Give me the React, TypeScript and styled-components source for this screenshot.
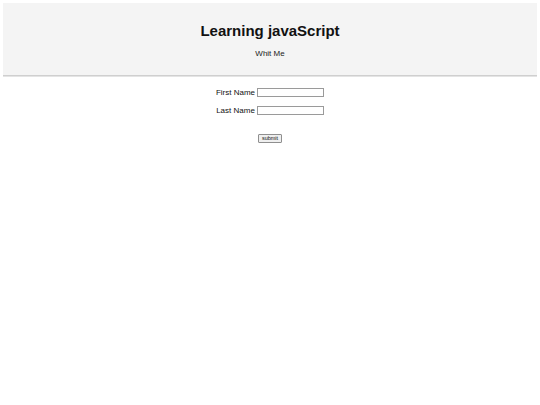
import React from "react";
import styled, { createGlobalStyle } from "styled-components";

const Global = createGlobalStyle`
  html, body { margin: 0; padding: 0; background: #ffffff; }
  body { padding: 3px; font-family: "Liberation Sans", Arial, sans-serif; color: #000; }
`;

const Header = styled.header`
  background: #f4f4f4;
  border-bottom: 1px solid #cfcfcf;
  box-shadow: 0 1px 0 #e4e4e4;
  text-align: center;
  padding: 18px 0 14px;
  height: 40px;
`;

const Title = styled.h1`
  margin: 0;
  font-size: 15px;
  font-weight: bold;
  line-height: 19px;
  color: #111;
`;

const Subtitle = styled.p`
  margin: 9px 0 0;
  font-size: 8px;
  line-height: 10px;
  color: #222;
`;

const Form = styled.form`
  display: flex;
  flex-direction: column;
  align-items: center;
  padding-top: 11px;
`;

const Row = styled.label`
  display: flex;
  align-items: center;
  gap: 2px;
  height: 10px;
  margin-bottom: 8px;
  font-size: 8px;
  color: #111;
`;

const Field = styled.input`
  box-sizing: border-box;
  width: 67px;
  height: 9px;
  margin: 0;
  padding: 0;
  border: 1px solid #9a9a9a;
  background: #fff;
  font-size: 6px;
`;

const Submit = styled.button`
  box-sizing: border-box;
  margin-top: 11px;
  width: 24px;
  height: 9px;
  padding: 0;
  border: 1px solid #8f8f8f;
  border-radius: 1px;
  background: #efefef;
  font-family: "Liberation Sans", Arial, sans-serif;
  font-size: 5.5px;
  line-height: 7px;
  color: #111;
`;

export default function App() {
  return (
    <>
      <Global />
      <Header>
        <Title>Learning javaScript</Title>
        <Subtitle>Whit Me</Subtitle>
      </Header>
      <Form onSubmit={(e) => e.preventDefault()}>
        <Row>
          First Name<Field type="text" />
        </Row>
        <Row>
          Last Name<Field type="text" />
        </Row>
        <Submit type="submit">submit</Submit>
      </Form>
    </>
  );
}
